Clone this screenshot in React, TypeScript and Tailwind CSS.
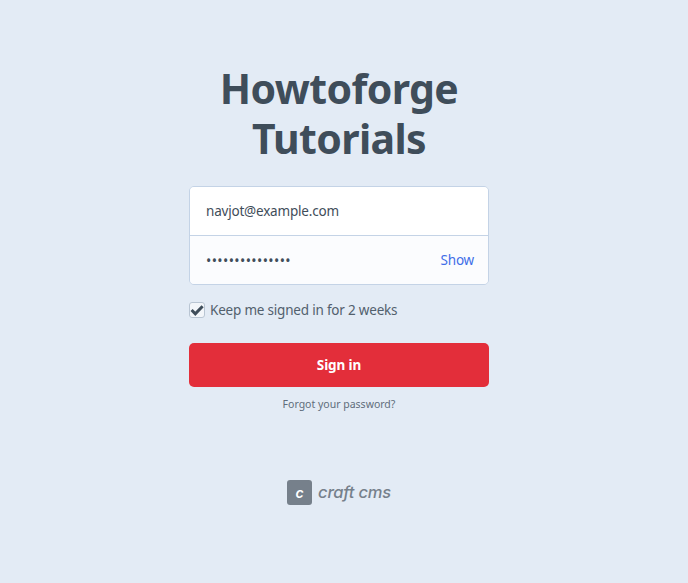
export default function App() {
  return (
    <div className="min-h-[583px] bg-[#e3ebf5] flex flex-col items-center pt-[63px] pr-[10px] font-['Noto_Sans',sans-serif] text-[#3f4d5a]">
      <form className="w-[300px] flex flex-col">
        <h1 className="text-center text-[41px] leading-[50px] font-bold mb-[23px] tracking-[-0.6px]">
          Howtoforge
          <br />
          Tutorials
        </h1>

        {/* Credentials */}
        <div className="border border-[#c4d3e6] rounded-[5px] overflow-hidden">
          <div className="h-[49px] bg-white flex items-center px-4 text-[13.5px] tracking-[-0.2px] border-b border-[#c4d3e6]">
            navjot@example.com
          </div>
          <div className="h-[48px] bg-[#fbfcfe] flex items-center justify-between pl-4 pr-[14px]">
            <span className="text-[14px] tracking-[0.4px]">•••••••••••••••</span>
            <span className="text-[13.5px] tracking-[-0.2px] text-[#3f6fe8]">Show</span>
          </div>
        </div>

        {/* Remember me */}
        <label className="flex items-center gap-[5px] mt-[16px] text-[13.5px] tracking-[-0.2px] text-[#52606d] leading-[18px]">
          <span className="w-4 h-4 rounded-[3px] bg-[#f3f6fa] border border-[#b9c5d3] flex items-center justify-center">
            <svg viewBox="0 0 14 14" className="w-[14px] h-[14px]">
              <path d="M1.6 7 5.3 10.8 12.6 3.2" fill="none" stroke="#3f4d5a" strokeWidth="3" />
            </svg>
          </span>
          Keep me signed in for 2 weeks
        </label>

        <button type="button" className="mt-[24px] h-[44px] rounded-[5px] bg-[#e32e3a] text-white text-[13.5px] tracking-[-0.1px] font-bold">
          Sign in
        </button>

        <p className="mt-[9px] text-center text-[10.5px] leading-[16px] text-[#606d7b]">Forgot your password?</p>

        {/* Logo */}
        <div className="mt-[68px] flex items-center justify-center gap-[6px] text-[#76808b]">
          <span className="w-[25px] h-[25px] rounded-[3px] bg-[#76808b] text-white flex items-center justify-center text-[14px] font-semibold italic leading-none font-['Inter',sans-serif]">
            c
          </span>
          <span className="text-[16.5px] leading-[22px] mb-[2px] font-medium italic tracking-[-0.2px] font-['Inter',sans-serif]">craft cms</span>
        </div>
      </form>
    </div>
  );
}
